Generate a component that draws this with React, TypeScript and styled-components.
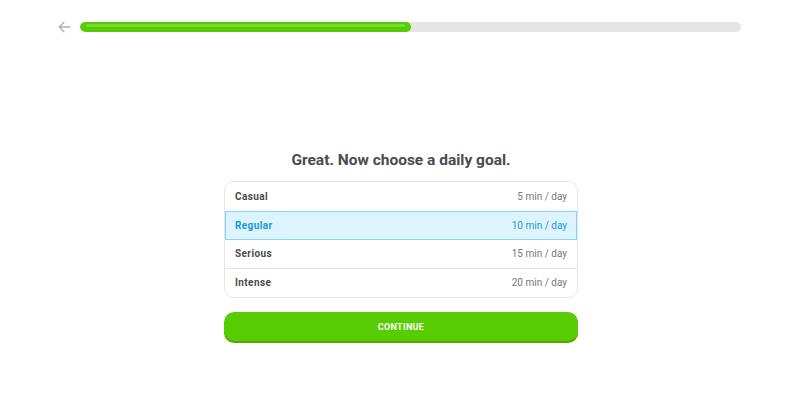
import React, { useState } from 'react';
import styled, { createGlobalStyle } from 'styled-components';

const GlobalStyle = createGlobalStyle`
  html, body {
    margin: 0;
    padding: 0;
    background: #fff;
    font-family: Roboto, "DejaVu Sans", sans-serif;
  }
`;

const Page = styled.div`
  width: 800px;
  height: 419px;
  display: flex;
  flex-direction: column;
`;

const Header = styled.div`
  display: flex;
  align-items: center;
  gap: 9px;
  padding: 20px 59px 0 57px;
  height: 14px;
`;

const BackButton = styled.button`
  border: 0;
  background: none;
  padding: 0;
  width: 14px;
  height: 14px;
  display: flex;
  align-items: center;
  justify-content: center;
  cursor: pointer;
`;

const Track = styled.div`
  flex: 1;
  height: 10px;
  border-radius: 5px;
  background: #e5e5e5;
  overflow: hidden;
`;

const Fill = styled.div`
  height: 100%;
  border-radius: 5px;
  background: #58cc02;
  position: relative;
  &::after {
    content: '';
    position: absolute;
    left: 6px;
    right: 6px;
    top: 2px;
    height: 3px;
    border-radius: 2px;
    background: rgba(255, 255, 255, 0.22);
  }
`;

const Main = styled.div`
  width: 354px;
  margin: 116px 0 0 224px;
  display: flex;
  flex-direction: column;
  align-items: stretch;
`;

const Title = styled.h1`
  margin: 0 0 11px;
  text-align: center;
  font-size: 15.5px;
  font-weight: 700;
  color: #4b4b4b;
  line-height: 20px;
`;

const Card = styled.div`
  border: 1px solid #e5e5e5;
  border-radius: 10px;
  overflow: hidden;
`;

const Row = styled.div<{ $selected?: boolean }>`
  box-sizing: border-box;
  display: flex;
  justify-content: space-between;
  align-items: center;
  height: 29.5px;
  padding: 0 10px;
  font-size: 10px;
  cursor: pointer;
  background: ${(p) => (p.$selected ? '#ddf4ff' : '#fff')};
  color: ${(p) => (p.$selected ? '#1899d6' : '#4b4b4b')};
  border-top: 1px solid ${(p) => (p.$selected ? '#84d8ff' : '#e5e5e5')};
  border-bottom: 1px solid ${(p) => (p.$selected ? '#84d8ff' : 'transparent')};
  box-shadow: ${(p) => (p.$selected ? 'inset 1px 0 #84d8ff, inset -1px 0 #84d8ff' : 'none')};
  position: relative;
  z-index: ${(p) => (p.$selected ? 1 : 0)};
  &:first-child {
    border-top-color: transparent;
  }
  & + & {
    margin-top: -1px;
  }
`;

const Label = styled.span`
  font-weight: 700;
  letter-spacing: 0.4px;
`;

const Amount = styled.span<{ $selected?: boolean }>`
  color: ${(p) => (p.$selected ? '#1899d6' : '#777')};
`;

const ContinueButton = styled.button`
  margin-top: 14px;
  height: 29px;
  border: 0;
  border-radius: 10px;
  background: #58cc02;
  box-shadow: 0 2px 0 #58a700;
  color: #fff;
  font-family: Roboto, "DejaVu Sans", sans-serif;
  font-size: 9px;
  font-weight: 700;
  letter-spacing: 0.3px;
  cursor: pointer;
`;

const goals = [
  { name: 'Casual', mins: 5 },
  { name: 'Regular', mins: 10 },
  { name: 'Serious', mins: 15 },
  { name: 'Intense', mins: 20 },
];

export default function App() {
  const [selected, setSelected] = useState('Regular');
  return (
    <Page>
      <GlobalStyle />
      <Header>
        <BackButton aria-label="Back">
          <svg width="13" height="12" viewBox="0 0 13 12" fill="none" stroke="#afafaf" strokeWidth="1.3" strokeLinecap="round" strokeLinejoin="round">
            <path d="M12 6H1.5M6 1.2L1.2 6L6 10.8" />
          </svg>
        </BackButton>
        <Track>
          <Fill style={{ width: '50%' }} />
        </Track>
      </Header>
      <Main>
        <Title>Great. Now choose a daily goal.</Title>
        <Card>
          {goals.map((g) => (
            <Row key={g.name} $selected={g.name === selected} onClick={() => setSelected(g.name)}>
              <Label>{g.name}</Label>
              <Amount $selected={g.name === selected}>{g.mins} min / day</Amount>
            </Row>
          ))}
        </Card>
        <ContinueButton>CONTINUE</ContinueButton>
      </Main>
    </Page>
  );
}
